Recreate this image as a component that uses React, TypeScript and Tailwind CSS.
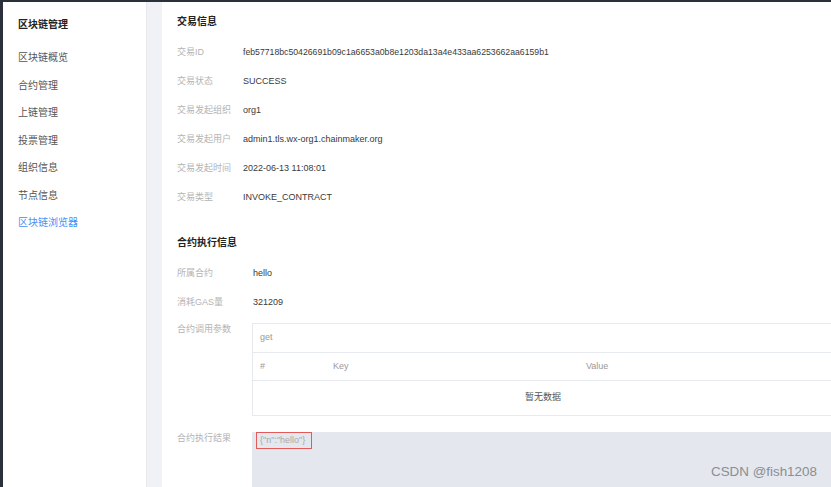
const font = { fontFamily: '"Liberation Sans", "Noto Sans CJK SC", sans-serif' }

const menu = ["区块链概览", "合约管理", "上链管理", "投票管理", "组织信息", "节点信息", "区块链浏览器"]

const txRows = [
  ["交易ID", "feb57718bc50426691b09c1a6653a0b8e1203da13a4e433aa6253662aa6159b1"],
  ["交易状态", "SUCCESS"],
  ["交易发起组织", "org1"],
  ["交易发起用户", "admin1.tls.wx-org1.chainmaker.org"],
  ["交易发起时间", "2022-06-13 11:08:01"],
  ["交易类型", "INVOKE_CONTRACT"],
]

function Row({ label, value, labelWidth, valueClass = "" }: { label: string; value: string; labelWidth: string; valueClass?: string }) {
  return (
    <div className="flex h-[29px] items-center text-[9px]">
      <div className={`${labelWidth} shrink-0 text-[#b4b4b4]`}>{label}</div>
      <div className={`text-[#3a3a3a] ${valueClass}`}>{value}</div>
    </div>
  )
}

export default function App() {
  return (
    <div className="relative flex h-[487px] w-[831px] overflow-hidden bg-[#2b303b] pl-[3px] pt-[2px]" style={font}>
      {/* sidebar */}
      <div className="w-[144px] shrink-0 border-r border-[#e8e8ec] bg-white pl-[15px] pt-[17px]">
        <div className="h-[12px] text-[10px] font-bold leading-[12px] text-[#222]">区块链管理</div>
        <div className="mt-[13px]">
          {menu.map((m, i) => (
            <div
              key={m}
              className={`flex h-[27.5px] items-center text-[10px] ${i === menu.length - 1 ? "text-[#4a8ef5]" : "text-[#555]"}`}
            >
              {m}
            </div>
          ))}
        </div>
      </div>

      <div className="w-[15px] shrink-0 bg-[#f0f2f5]" />

      {/* content */}
      <div className="flex-1 bg-white pl-[15px] pt-[14px]">
        <div className="h-[12px] text-[10px] font-bold leading-[12px] text-[#222]">交易信息</div>
        <div className="mt-[10px]">
          {txRows.map(([l, v], i) => (
            <Row key={l} label={l} value={v} labelWidth="w-[66px]" valueClass={i === 0 ? "text-[8.7px]" : ""} />
          ))}
        </div>

        <div className="mt-[25px] h-[12px] text-[10px] font-bold leading-[12px] text-[#222]">合约执行信息</div>
        <div className="mt-[10px]">
          <Row label="所属合约" value="hello" labelWidth="w-[76px]" />
          <Row label="消耗GAS量" value="321209" labelWidth="w-[76px]" />
        </div>

        <div className="mt-[6px] flex text-[9px]">
          <div className="w-[75px] shrink-0 leading-[12px] text-[#b4b4b4]">合约调用参数</div>
          <div className="w-[582px] shrink-0 border border-[#e6e9ef]">
            <div className="flex h-[29px] items-center border-b border-[#e6e9ef] pl-[7px] text-[#999]">get</div>
            <div className="flex h-[28px] items-center border-b border-[#e6e9ef] text-[#999]">
              <div className="w-[80px] pl-[7px]">#</div>
              <div className="w-[253px]">Key</div>
              <div>Value</div>
            </div>
            <div className="flex h-[34px] items-center justify-center text-[#555]">暂无数据</div>
          </div>
        </div>

        <div className="mt-[16px] flex text-[9px]">
          <div className="w-[75px] shrink-0 leading-[12px] text-[#b4b4b4]">合约执行结果</div>
          <div className="h-[60px] w-[582px] shrink-0 bg-[#e4e7ed] pl-[4px]">
            <div className="flex h-[17px] w-[56px] items-center border border-[#e25b5b] pl-[3px] text-[#aaa]">
              {'{"n":"hello"}'}
            </div>
          </div>
        </div>
      </div>

      <div className="absolute left-[711px] top-[463px] text-[13.4px] leading-[18px] text-[#8a8d93]">CSDN @fish1208</div>
    </div>
  )
}
